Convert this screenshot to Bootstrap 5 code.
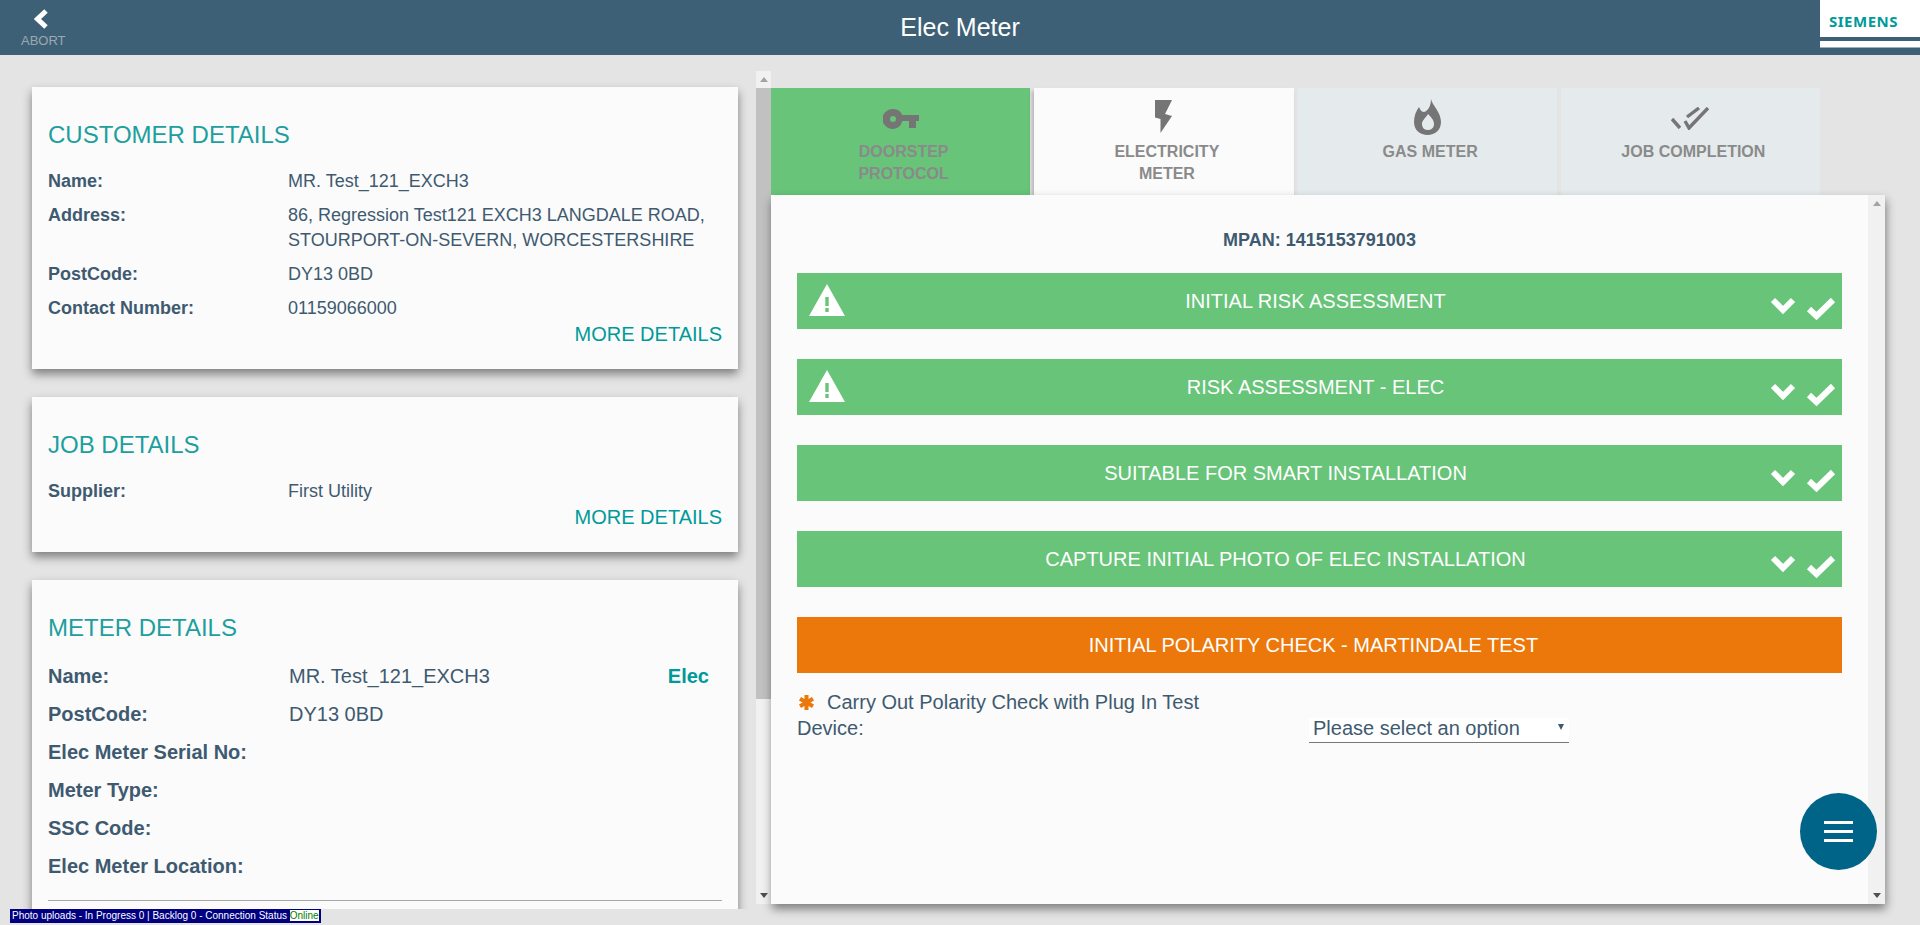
<!DOCTYPE html>
<html lang="en">
  <head>
    <title>Elec Meter</title>
    <meta charset="utf-8" />
    <meta name="viewport" content="width=device-width, initial-scale=1" />
    <link href="https://cdn.jsdelivr.net/npm/bootstrap@5.3.2/dist/css/bootstrap.min.css" rel="stylesheet" />
    <script src="https://cdn.jsdelivr.net/npm/bootstrap@5.3.2/dist/js/bootstrap.bundle.min.js"></script>
    <style>
      html, body { height: 100%; overflow: hidden; }
      body { background: #e4e4e4; font-family: "Liberation Sans", Arial, sans-serif; color: #3e5a70; font-size: 18px; }

      .top-bar { height: 55px; background: #3e6076; }
      .back-box { width: 100px; padding: 9px 0 0 21px; }
      .back-box svg { display: block; margin-left: 13px; }
      .back-text { font-size: 13px; line-height: 13px; color: #9aa9b3; margin-top: 5px; }
      .page-title { color: #fff; font-size: 25px; line-height: 55px; }
      .logo-box { width: 100px; height: 48px; background: #fff; border-bottom: 1px solid #9fb0bb; position: relative; }
      .logo-box::after { content: ""; position: absolute; left: 0; right: 0; top: 37px; height: 4px; background: #3e6076; }
      .logo-text { font-family: "Noto Sans", sans-serif; font-weight: 700; font-size: 15px; line-height: 37px; padding-top: 3px; padding-left: 9px; color: #009a9a; letter-spacing: .5px; }

      .main-area { height: 854px; }
      .left-pane { width: 756px; height: 854px; overflow: hidden; padding: 32px 18px 0 32px; }
      .info-card { border: 0; border-radius: 0; background: #fbfbfb; box-shadow: 0 5px 9px rgba(0, 0, 0, .45); margin-bottom: 28px; padding: 35px 16px 23px; flex-shrink: 0; }
      .info-title { color: #1d9f9f; font-size: 24px; line-height: 26px; margin: 0 0 21px; font-weight: 400; }
      .info-row { line-height: 25px; margin-bottom: 9px; }
      .info-label { width: 240px; font-weight: 700; flex-shrink: 0; }
      .more-link { color: #009a9a; font-size: 20px; line-height: 24px; margin-top: -8px; text-align: right; }
      .meter-card { padding-bottom: 200px; }
      .meter-card .info-title { margin-bottom: 16px; }
      .meter-row { font-size: 20px; line-height: 38px; padding-right: 13px; }
      .meter-row .info-label { width: 241px; }
      .meter-type { color: #009a9a; font-weight: 700; }
      .meter-rule { border-top: 1px solid #a8a8a8; margin-top: 15px; }

      .bar-track { background: #f1f1f1; flex-shrink: 0; }
      .left-bar { width: 15px; height: 833px; margin-top: 16px; }
      .panel-bar { width: 17px; }
      .bar-end { height: 17px; }
      .arrow-up { width: 0; height: 0; border: 4px solid transparent; border-top: 0; border-bottom: 5px solid #a3a3a3; }
      .arrow-down { width: 0; height: 0; border: 4px solid transparent; border-bottom: 0; border-top: 5px solid #505050; }
      .bar-thumb { height: 611px; background: #c1c1c1; }

      .right-col { width: 1114px; padding-top: 33px; }
      .tab-strip { width: 1049px; gap: 4px; height: 107px; }
      .step-tab { width: 260px; height: 107px; background: #e5eaec; color: #8a8a8a; font-weight: 700; font-size: 16px; line-height: 22px; text-align: center; }
      .step-icon { height: 53px; }
      .step-text { padding-left: 6px; }
      .step-done { background: #67c479; }
      .step-active { background: #fbfbfb; box-shadow: -2px 3px 4px rgba(0, 0, 0, .22); }
      .job-panel { height: 709px; background: #fbfbfb; box-shadow: 1px 5px 9px rgba(0, 0, 0, .45); position: relative; }
      .panel-body { padding: 0 26px; }
      .mpan-line { font-weight: 700; line-height: 20px; padding-top: 35px; margin-bottom: 23px; text-align: center; }
      .section-bar { height: 56px; margin-bottom: 30px; background: #67c479; color: #fff; font-size: 20px; display: grid; grid-template-columns: 1fr auto 1fr; align-items: center; }
      .section-open { background: #ec780b; margin-bottom: 16px; }
      .shift-warn { padding-right: 8px; }
      .shift-tick { padding-right: 68px; }
      .shift-open { padding-right: 12px; }
      .warn-slot { padding-left: 12px; }
      .warn-slot svg { display: block; margin-top: -2px; }
      .tick-slot { gap: 10px; padding-right: 6px; padding-top: 15px; }
      .field-row { font-size: 20px; line-height: 26px; }
      .field-label { width: 512px; padding-right: 70px; }
      .field-label svg { margin: -3px 12px 0 1px; vertical-align: middle; }
      .select-wrap { width: 260px; height: 25px; margin-top: 26px; position: relative; }
      .select-wrap::after { content: ""; position: absolute; right: 5px; top: 9px; border: 3px solid transparent; border-bottom: 0; border-top: 6px solid #3e5a70; }
      .plain-select { width: 100%; height: 25px; appearance: none; border: 0; border-bottom: 1px solid #777; border-radius: 0; background: #fff; color: #3e5a70; font-size: 20px; line-height: 20px; padding: 0 4px 4px; font-family: inherit; }
      .fab-btn { position: absolute; right: 8px; bottom: 34px; width: 77px; height: 77px; border: 0; border-radius: 50%; background: #006488; gap: 6px; }
      .fab-btn span { display: block; width: 29px; height: 3px; background: #fff; }

      .status-strip { height: 16px; padding-left: 10px; }
      .status-bar { background: #000080; color: #fff; font-size: 10px; line-height: 12px; height: 14px; padding: 1px 2px; }
      .status-online { background: #fff; color: #008000; }
    </style>
  </head>
  <body>
    <header class="top-bar d-flex">
      <div class="back-box">
        <svg width="15" height="20" viewBox="0 0 15 20"><polyline points="12,2 3.5,10 12,18" fill="none" stroke="#fff" stroke-width="5" /></svg>
        <div class="back-text">ABORT</div>
      </div>
      <div class="page-title flex-grow-1 text-center">Elec Meter</div>
      <div class="logo-box"><div class="logo-text">SIEMENS</div></div>
    </header>

    <div class="main-area d-flex">
      <div class="left-pane d-flex flex-column">
        <div class="card info-card">
          <h2 class="info-title">CUSTOMER DETAILS</h2>
          <div class="info-row d-flex"><div class="info-label">Name:</div><div>MR. Test_121_EXCH3</div></div>
          <div class="info-row d-flex"><div class="info-label">Address:</div><div>86, Regression Test121 EXCH3 LANGDALE ROAD,<br />STOURPORT-ON-SEVERN, WORCESTERSHIRE</div></div>
          <div class="info-row d-flex"><div class="info-label">PostCode:</div><div>DY13 0BD</div></div>
          <div class="info-row d-flex"><div class="info-label">Contact Number:</div><div>01159066000</div></div>
          <div class="more-link">MORE DETAILS</div>
        </div>

        <div class="card info-card">
          <h2 class="info-title">JOB DETAILS</h2>
          <div class="info-row d-flex"><div class="info-label">Supplier:</div><div>First Utility</div></div>
          <div class="more-link">MORE DETAILS</div>
        </div>

        <div class="card info-card meter-card">
          <h2 class="info-title">METER DETAILS</h2>
          <div class="meter-row d-flex"><div class="info-label">Name:</div><div class="flex-grow-1">MR. Test_121_EXCH3</div><div class="meter-type">Elec</div></div>
          <div class="meter-row d-flex"><div class="info-label">PostCode:</div><div>DY13 0BD</div></div>
          <div class="meter-row d-flex"><div class="info-label">Elec Meter Serial No:</div></div>
          <div class="meter-row d-flex"><div class="info-label">Meter Type:</div></div>
          <div class="meter-row d-flex"><div class="info-label">SSC Code:</div></div>
          <div class="meter-row d-flex"><div class="info-label">Elec Meter Location:</div></div>
          <div class="meter-rule"></div>
        </div>
      </div>

      <div class="bar-track left-bar d-flex flex-column">
        <div class="bar-end d-flex align-items-center justify-content-center"><div class="arrow-up"></div></div>
        <div class="bar-thumb"></div>
        <div class="flex-grow-1"></div>
        <div class="bar-end d-flex align-items-center justify-content-center"><div class="arrow-down"></div></div>
      </div>

      <div class="right-col">
        <div class="tab-strip d-flex">
          <div class="step-tab step-done">
            <div class="step-icon d-flex align-items-center justify-content-center pt-2">
              <svg width="36" height="20" viewBox="0 0 36 20"><path fill="#757575" fill-rule="evenodd" d="M10 0a10 10 0 0 1 9.3 6H36v6h-3v7h-7v-7h-6.700a10 10 0 1 1-9.300-12zM10 7a3 3 0 1 0 0 6 3 3 0 0 0 0-6z" /></svg>
            </div>
            <div class="step-text">DOORSTEP<br />PROTOCOL</div>
          </div>
          <div class="step-tab step-active">
            <div class="step-icon d-flex align-items-center justify-content-center pt-1">
              <svg width="17" height="33" viewBox="0 0 17 33"><polygon fill="#757575" points="0,0 17,0 10,14 17,16 5.500,33 5.500,19 0,17.500" /></svg>
            </div>
            <div class="step-text">ELECTRICITY<br />METER</div>
          </div>
          <div class="step-tab">
            <div class="step-icon d-flex align-items-center justify-content-center pt-1">
              <svg width="27" height="36" viewBox="0 0 27 36"><path fill="#757575" fill-rule="evenodd" d="M17 0C18 6 27 13 27 23C27 31 21 36 13.500 36C6 36 0 31 0 23C0 17 2 12 5 8C6 11 8 13 10 13C14 12 17 7 17 0ZM14 15C17 18 20 21 20 25C20 29 17 31 13.500 31C10 31 8 28 8 25C8 21 11 20 14 15Z" /></svg>
            </div>
            <div class="step-text">GAS METER</div>
          </div>
          <div class="step-tab">
            <div class="step-icon d-flex align-items-center justify-content-center pt-2">
              <svg width="38" height="23" viewBox="0 0 38 23" fill="none" stroke="#757575" stroke-width="3.400"><path d="M1 12L9 21M14 14L18 21L37 1M16 10L28 1" /></svg>
            </div>
            <div class="step-text">JOB COMPLETION</div>
          </div>
        </div>

        <div class="job-panel d-flex">
          <div class="panel-body flex-grow-1">
            <div class="mpan-line">MPAN: 1415153791003</div>

            <div class="section-bar">
              <div class="warn-slot"><svg width="36" height="32" viewBox="0 0 36 32"><path fill="#fff" fill-rule="evenodd" d="M18 0L36 32H0ZM16.300 13V22H19.700V13ZM16.300 24V28H19.700V24Z" /></svg></div>
              <div class="shift-warn">INITIAL RISK ASSESSMENT</div>
              <div class="tick-slot d-flex justify-content-end">
                <svg width="26" height="19" viewBox="0 0 26 19"><polyline points="3,4 13,14 23,4" fill="none" stroke="#fff" stroke-width="6" /></svg>
                <svg width="30" height="25" viewBox="0 0 30 25"><polyline points="3,13 10.500,20 27,4" fill="none" stroke="#fff" stroke-width="6" /></svg>
              </div>
            </div>

            <div class="section-bar">
              <div class="warn-slot"><svg width="36" height="32" viewBox="0 0 36 32"><path fill="#fff" fill-rule="evenodd" d="M18 0L36 32H0ZM16.300 13V22H19.700V13ZM16.300 24V28H19.700V24Z" /></svg></div>
              <div class="shift-warn">RISK ASSESSMENT - ELEC</div>
              <div class="tick-slot d-flex justify-content-end">
                <svg width="26" height="19" viewBox="0 0 26 19"><polyline points="3,4 13,14 23,4" fill="none" stroke="#fff" stroke-width="6" /></svg>
                <svg width="30" height="25" viewBox="0 0 30 25"><polyline points="3,13 10.500,20 27,4" fill="none" stroke="#fff" stroke-width="6" /></svg>
              </div>
            </div>

            <div class="section-bar">
              <div></div>
              <div class="shift-tick">SUITABLE FOR SMART INSTALLATION</div>
              <div class="tick-slot d-flex justify-content-end">
                <svg width="26" height="19" viewBox="0 0 26 19"><polyline points="3,4 13,14 23,4" fill="none" stroke="#fff" stroke-width="6" /></svg>
                <svg width="30" height="25" viewBox="0 0 30 25"><polyline points="3,13 10.500,20 27,4" fill="none" stroke="#fff" stroke-width="6" /></svg>
              </div>
            </div>

            <div class="section-bar">
              <div></div>
              <div class="shift-tick">CAPTURE INITIAL PHOTO OF ELEC INSTALLATION</div>
              <div class="tick-slot d-flex justify-content-end">
                <svg width="26" height="19" viewBox="0 0 26 19"><polyline points="3,4 13,14 23,4" fill="none" stroke="#fff" stroke-width="6" /></svg>
                <svg width="30" height="25" viewBox="0 0 30 25"><polyline points="3,13 10.500,20 27,4" fill="none" stroke="#fff" stroke-width="6" /></svg>
              </div>
            </div>

            <div class="section-bar section-open">
              <div></div>
              <div class="shift-open">INITIAL POLARITY CHECK - MARTINDALE TEST</div>
              <div></div>
            </div>

            <div class="field-row d-flex">
              <div class="field-label">
                <svg width="17" height="17" viewBox="0 0 17 17" stroke="#ec780b" stroke-width="4"><path d="M8.500 1V16M2 4.700L15 12.300M2 12.300L15 4.700" /></svg>Carry Out Polarity Check with Plug In Test Device:
              </div>
              <div class="select-wrap">
                <select class="plain-select"><option>Please select an option</option></select>
              </div>
            </div>
          </div>

          <div class="bar-track panel-bar d-flex flex-column justify-content-between">
            <div class="bar-end d-flex align-items-center justify-content-center"><div class="arrow-up"></div></div>
            <div class="bar-end d-flex align-items-center justify-content-center"><div class="arrow-down"></div></div>
          </div>

          <button class="fab-btn d-flex flex-column align-items-center justify-content-center" type="button" aria-label="Menu"><span></span><span></span><span></span></button>
        </div>
      </div>
    </div>

    <div class="status-strip d-flex">
      <div class="status-bar">Photo uploads - In Progress 0 | Backlog 0 - Connection Status <span class="status-online">Online</span></div>
    </div>
  </body>
</html>
